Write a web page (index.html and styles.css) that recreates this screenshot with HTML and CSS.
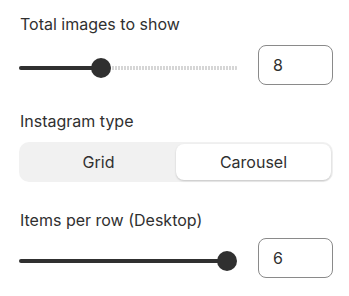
FILE: index.html
```html
<!DOCTYPE html>
<html lang="en">
<head>
  <meta charset="UTF-8">
  <title>Instagram feed settings</title>
  <link rel="stylesheet" href="styles.css">
</head>
<body>
<div class="settings">

  <div class="field">
    <div class="field-label">Total images to show</div>
    <div class="range-row">
      <div class="slider">
        <div class="slider-rest"></div>
        <div class="slider-fill" style="width: 82px"></div>
        <div class="slider-thumb" style="left: 72px"></div>
      </div>
      <input class="number-input" type="text" value="8">
    </div>
  </div>

  <div class="field">
    <div class="field-label">Instagram type</div>
    <div class="segmented">
      <div class="segment">Grid</div>
      <div class="segment selected">Carousel</div>
    </div>
  </div>

  <div class="field">
    <div class="field-label">Items per row (Desktop)</div>
    <div class="range-row">
      <div class="slider">
        <div class="slider-fill" style="width: 208px"></div>
        <div class="slider-thumb" style="left: 198px"></div>
      </div>
      <input class="number-input" type="text" value="6">
    </div>
  </div>

</div>
</body>
</html>
```

FILE: styles.css
```css
* {
  box-sizing: border-box;
}

body {
  margin: 0;
  background: #ffffff;
  font-family: Inter, "Noto Sans", sans-serif;
  color: #303030;
}

.settings {
  padding: 14px 16px 0 19px;
  display: flex;
  flex-direction: column;
  gap: 26px;
}

.field-label {
  font-size: 16px;
  line-height: 20px;
  padding-left: 1px;
  margin-bottom: 11px;
}

.field:last-child .field-label {
  margin-top: 2px;
  margin-bottom: 8px;
}

.range-row {
  display: flex;
  align-items: center;
  gap: 20px;
}

.slider {
  position: relative;
  flex: 1;
  height: 20px;
  margin-top: 6px;
}

.slider-fill {
  position: absolute;
  left: 0;
  top: 8px;
  height: 4px;
  border-radius: 2px;
  background: #303030;
}

.slider-rest {
  position: absolute;
  left: 0;
  right: 0;
  top: 8px;
  height: 4px;
  border-radius: 2px;
  background: repeating-linear-gradient(90deg, #d6d6d6 0 2px, transparent 2px 3px);
}

.slider-thumb {
  position: absolute;
  top: 0;
  width: 20px;
  height: 20px;
  border-radius: 50%;
  background: #303030;
}

.number-input {
  width: 75px;
  height: 40px;
  padding: 0 14px;
  border: 1px solid #8a8a8a;
  border-radius: 8px;
  font-family: inherit;
  font-size: 16px;
  color: #303030;
  background: #ffffff;
}

.segmented {
  display: flex;
  padding: 2px;
  background: #f1f1f1;
  border-radius: 10px;
}

.segment {
  flex: 1;
  height: 36px;
  display: flex;
  align-items: center;
  justify-content: center;
  font-size: 16px;
  border-radius: 8px;
}

.segment.selected {
  background: #ffffff;
  box-shadow: 0 1px 2px rgba(0, 0, 0, 0.18);
}
```
